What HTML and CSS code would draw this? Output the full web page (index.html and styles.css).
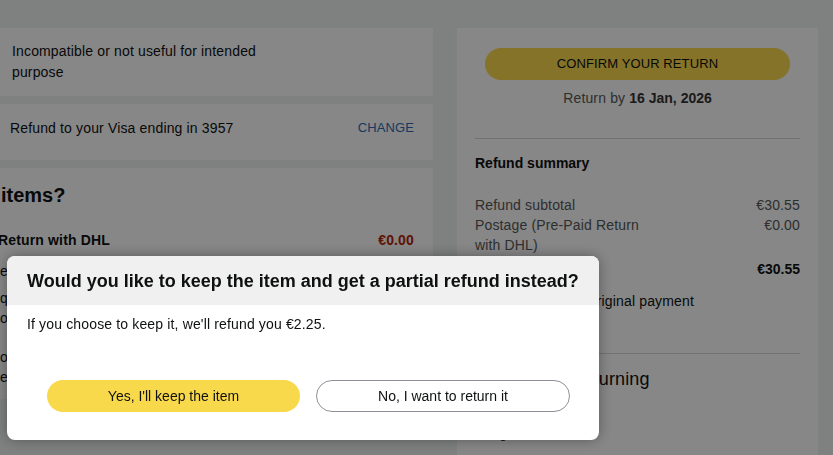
FILE: index.html
```html
<!DOCTYPE html>
<html lang="en">
<head>
<meta charset="utf-8">
<title>Confirm your return</title>
<link rel="stylesheet" href="styles.css">
</head>
<body>
<div class="page">
  <div class="left-col">
    <section class="card card-reason">
      <p class="reason">Incompatible or not useful for intended purpose</p>
    </section>
    <section class="card card-refund">
      <span>Refund to your Visa ending in 3957</span>
      <a class="link" href="#">CHANGE</a>
    </section>
    <section class="card card-items">
      <h2 class="items-title">items?</h2>
      <div class="option-row">
        <span class="option-name">Return with DHL</span>
        <span class="price-red">€0.00</span>
      </div>
      <p class="opt-line">e. Drop off your parcel at a DHL location</p>
      <p class="opt-para">qualifying drop-off points near you<br>or at a DHL Packstation</p>
      <p class="opt-para">open 7 days a week, no printer needed<br>ensure the item is securely packed</p>
    </section>
  </div>

  <aside class="card summary">
    <button class="btn-confirm" type="button">CONFIRM YOUR RETURN</button>
    <p class="return-by">Return by <b>16 Jan, 2026</b></p>
    <hr class="divider">
    <h3 class="sum-title">Refund summary</h3>
    <div class="sum-rows">
      <div class="sum-row"><span class="sum-label">Refund subtotal</span><span class="sum-val">€30.55</span></div>
      <div class="sum-row"><span class="sum-label">Postage (Pre-Paid Return with DHL)</span><span class="sum-val">€0.00</span></div>
    </div>
    <div class="sum-row total"><span>Total refund</span><span>€30.55</span></div>
    <p class="refunded">Refunded to your original payment method</p>
    <hr class="divider divider-2">
    <h3 class="returning">What you're returning</h3>
    <p class="item-name">Weight scale</p>
  </aside>
</div>

<div class="overlay"></div>

<div class="modal" role="dialog" aria-modal="true">
  <header class="modal-head">
    <h2 class="modal-title">Would you like to keep the item and get a partial refund instead?</h2>
  </header>
  <div class="modal-body">
    <p class="modal-text">If you choose to keep it, we'll refund you €2.25.</p>
    <div class="modal-actions">
      <button class="btn btn-yes" type="button">Yes, I'll keep the item</button>
      <button class="btn btn-no" type="button">No, I want to return it</button>
    </div>
  </div>
</div>
</body>
</html>
```

FILE: styles.css
```css
* { box-sizing: border-box; }

html, body {
  margin: 0;
  height: 100%;
  overflow: hidden;
}

body {
  background: #f0f2f2;
  font-family: "Liberation Sans", Arial, sans-serif;
  font-size: 14px;
  line-height: 20px;
  letter-spacing: 0.15px;
  color: #0f1111;
}

p, h2, h3 { margin: 0; }

.page {
  display: flex;
  align-items: flex-start;
  gap: 24px;
  padding: 28px 15px 0 0;
}

.left-col {
  width: 441px;
  margin-left: -8px;
  display: flex;
  flex-direction: column;
  gap: 8px;
  flex-shrink: 0;
}

.card {
  background: #ffffff;
}

.card-reason {
  padding: 13px 18px 13px 20px;
}

.reason {
  width: 262px;
  line-height: 21px;
}

.card-refund {
  display: flex;
  justify-content: space-between;
  align-items: center;
  padding: 14px 19px 22px 18px;
}

.link {
  color: #2f6bb3;
  text-decoration: none;
  font-size: 13px;
  letter-spacing: 0.1px;
}

.card-items {
  padding: 13px 19px 12px 8px;
}

.items-title {
  font-size: 20px;
  line-height: 28px;
  font-weight: 700;
  letter-spacing: 0;
  margin-left: 1px;
}

.option-row {
  display: flex;
  justify-content: space-between;
  margin-top: 21px;
  font-weight: 700;
  margin-left: -2px;
}

.price-red { color: #b12704; }

.opt-line {
  margin-top: 11px;
}

.opt-para {
  margin-top: 7px;
}

.opt-para + .opt-para { margin-top: 19px; }

.summary {
  width: 361px;
  flex-shrink: 0;
  padding: 20px 18px 24px;
}

.btn-confirm {
  display: block;
  width: calc(100% - 20px);
  margin: 0 10px;
  height: 32px;
  border: 0;
  border-radius: 16px;
  background: #f9d94c;
  font: inherit;
  font-size: 13px;
  letter-spacing: 0.1px;
  color: #0f1111;
}

.return-by {
  margin-top: 8px;
  text-align: center;
  color: #565959;
}

.return-by b { color: #333; letter-spacing: 0; }

.divider {
  border: 0;
  border-top: 1px solid #d5d9d9;
  margin: 30px 0 0;
}

.sum-title {
  font-size: 14px;
  font-weight: 700;
  letter-spacing: 0;
  margin-top: 14px;
}

.sum-rows { margin-top: 22px; }

.sum-row {
  display: flex;
  justify-content: space-between;
  align-items: flex-start;
}

.sum-label {
  width: 175px;
  color: #565959;
}

.sum-val { color: #565959; }

.sum-row.total {
  margin-top: 4px;
  font-weight: 700;
  letter-spacing: 0;
}

.refunded {
  margin-top: 12px;
  max-width: 255px;
}

.divider-2 { margin-top: 22px; }

.returning {
  margin-top: 13px;
  font-size: 18px;
  line-height: 24px;
  font-weight: 400;
}

.item-name {
  margin-top: 32px;
  color: #333;
}

.overlay {
  position: fixed;
  inset: 0;
  background: rgba(0, 0, 0, 0.47);
}

.modal {
  position: fixed;
  left: 7px;
  top: 256px;
  width: 592px;
  background: #ffffff;
  border-radius: 8px;
  overflow: hidden;
  box-shadow: 0 0 14px rgba(0, 0, 0, 0.35);
}

.modal-head {
  height: 49px;
  display: flex;
  align-items: center;
  padding: 0 20px;
  background: #f0f0f0;
}

.modal-title {
  font-size: 18px;
  line-height: 24px;
  font-weight: 700;
  letter-spacing: 0;
  white-space: nowrap;
}

.modal-body {
  padding: 9px 20px 28px;
}

.modal-actions {
  display: flex;
  gap: 16px;
  margin-top: 46px;
  padding-left: 20px;
}

.btn {
  height: 32px;
  border-radius: 16px;
  font: inherit;
  color: #0f1111;
}

.btn-yes {
  width: 253px;
  border: 0;
  background: #f9d94c;
}

.btn-no {
  width: 254px;
  background: #ffffff;
  border: 1px solid #8d9096;
}
```
